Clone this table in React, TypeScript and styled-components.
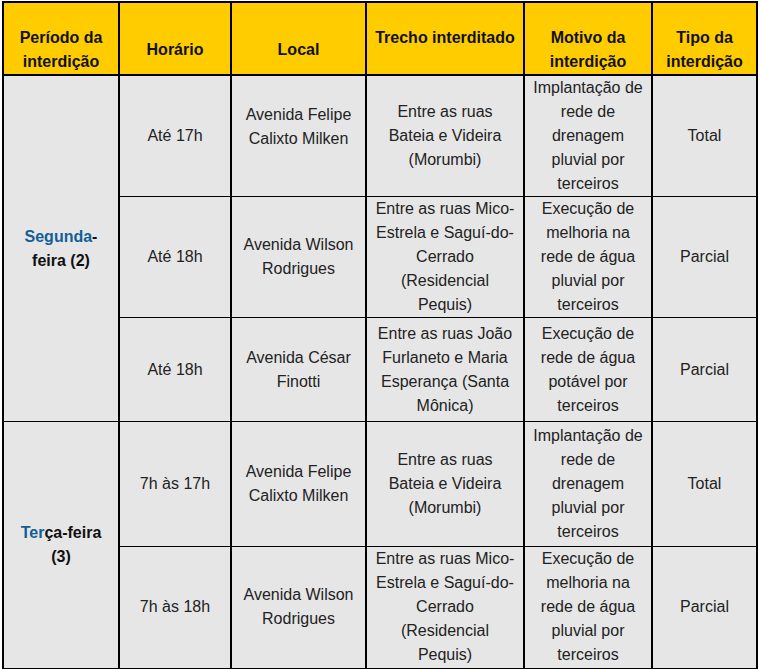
import React from "react";
import styled, { createGlobalStyle } from "styled-components";

const GlobalStyle = createGlobalStyle`
  html, body {
    margin: 0;
    padding: 0;
    background: #ffffff;
  }
  body {
    font-family: "Liberation Sans", Arial, sans-serif;
  }
`;

const Table = styled.table`
  border-collapse: collapse;
  table-layout: fixed;
  width: 756px;
  margin: 1px 0 0 2px;
  border: 2px solid #000;
  font-family: "Liberation Sans", Arial, sans-serif;
  font-size: 16px;
  line-height: 24px;
  text-align: center;
`;

const HeadCell = styled.th<{ $top?: boolean }>`
  background: #ffcc00;
  color: #111;
  font-weight: bold;
  border: 2px solid #000;
  padding: 23px 6px 0;
  vertical-align: ${(p) => (p.$top ? "top" : "middle")};
`;

const Row = styled.tr<{ $h: number }>`
  height: ${(p) => p.$h}px;
`;

const Cell = styled.td<{ $lift?: number }>`
  background: #e6e6e6;
  color: #222;
  border-top: 1px solid #000;
  border-bottom: 1px solid #000;
  border-left: 2px solid #000;
  border-right: 2px solid #000;
  padding: 0 6px ${(p) => (p.$lift ? p.$lift * 2 : 0)}px;
  vertical-align: middle;
`;

const DayCell = styled(Cell)`
  font-weight: bold;
  color: #111;
`;

const DayLink = styled.span`
  color: #135e99;
`;

type Entry = {
  hora: string;
  local: string;
  trecho: string;
  motivo: string;
  tipo: string;
  h: number;
  lift?: number;
};

const segunda: Entry[] = [
  {
    hora: "Até 17h",
    local: "Avenida Felipe Calixto Milken",
    trecho: "Entre as ruas Bateia e Videira (Morumbi)",
    motivo: "Implantação de rede de drenagem pluvial por terceiros",
    tipo: "Total",
    h: 121,
    lift: 9,
  },
  {
    hora: "Até 18h",
    local: "Avenida Wilson Rodrigues",
    trecho: "Entre as ruas Mico-Estrela e Saguí-do-Cerrado (Residencial Pequis)",
    motivo: "Execução de melhoria na rede de água pluvial por terceiros",
    tipo: "Parcial",
    h: 121,
  },
  {
    hora: "Até 18h",
    local: "Avenida César Finotti",
    trecho: "Entre as ruas João Furlaneto e Maria Esperança (Santa Mônica)",
    motivo: "Execução de rede de água potável por terceiros",
    tipo: "Parcial",
    h: 104,
  },
];

const terca: Entry[] = [
  {
    hora: "7h às 17h",
    local: "Avenida Felipe Calixto Milken",
    trecho: "Entre as ruas Bateia e Videira (Morumbi)",
    motivo: "Implantação de rede de drenagem pluvial por terceiros",
    tipo: "Total",
    h: 125,
  },
  {
    hora: "7h às 18h",
    local: "Avenida Wilson Rodrigues",
    trecho: "Entre as ruas Mico-Estrela e Saguí-do-Cerrado (Residencial Pequis)",
    motivo: "Execução de melhoria na rede de água pluvial por terceiros",
    tipo: "Parcial",
    h: 122,
  },
];

const renderDay = (entries: Entry[], day: React.ReactNode) =>
  entries.map((e, i) => (
    <Row key={i} $h={e.h}>
      {i === 0 && <DayCell rowSpan={entries.length}>{day}</DayCell>}
      <Cell>{e.hora}</Cell>
      <Cell $lift={e.lift}>{e.local}</Cell>
      <Cell>{e.trecho}</Cell>
      <Cell>{e.motivo}</Cell>
      <Cell>{e.tipo}</Cell>
    </Row>
  ));

const App = () => {
  return (
    <>
      <GlobalStyle />
      <Table>
        <colgroup>
          <col style={{ width: 116 }} />
          <col style={{ width: 112 }} />
          <col style={{ width: 135 }} />
          <col style={{ width: 158 }} />
          <col style={{ width: 128 }} />
          <col style={{ width: 105 }} />
        </colgroup>
        <thead>
          <Row $h={73}>
            <HeadCell>Período da interdição</HeadCell>
            <HeadCell>Horário</HeadCell>
            <HeadCell>Local</HeadCell>
            <HeadCell $top>Trecho interditado</HeadCell>
            <HeadCell>Motivo da interdição</HeadCell>
            <HeadCell>Tipo da interdição</HeadCell>
          </Row>
        </thead>
        <tbody>
          {renderDay(
            segunda,
            <>
              <DayLink>Segunda</DayLink>-feira (2)
            </>
          )}
          {renderDay(
            terca,
            <>
              <DayLink>Ter</DayLink>ça-feira (3)
            </>
          )}
        </tbody>
      </Table>
    </>
  );
};

export default App;
